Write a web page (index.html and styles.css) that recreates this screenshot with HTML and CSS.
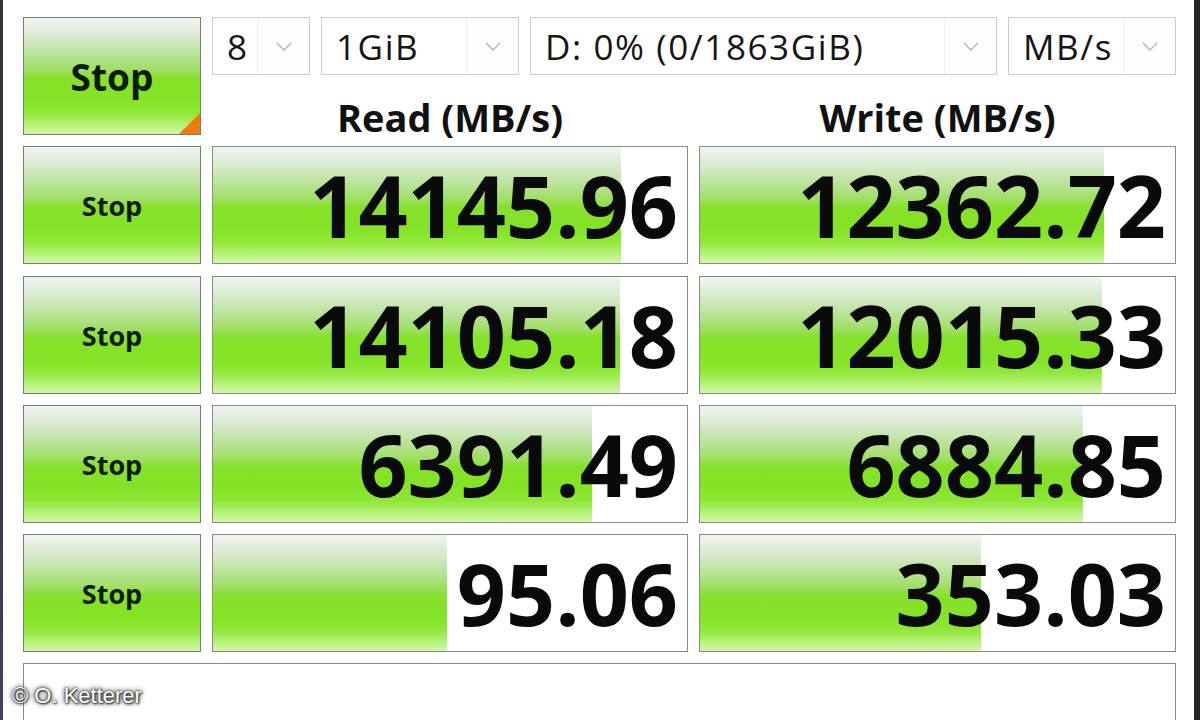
FILE: index.html
```html
<!DOCTYPE html>
<html>
<head>
<meta charset="utf-8">
<title>CrystalDiskMark</title>
<link rel="stylesheet" href="styles.css">
</head>
<body>
<div class="window">
  <div class="edge-l"></div>
  <main class="app">
    <div class="grid">
      <button class="stop stop-all">Stop</button>
      <div class="controls">
        <div class="combos">
          <div class="combo c-count"><span class="val">8</span><span class="arrow"><svg viewBox="0 0 16 9" width="16" height="9"><path d="M1 1 L8 8 L15 1" /></svg></span></div>
          <div class="combo c-size"><span class="val">1GiB</span><span class="arrow"><svg viewBox="0 0 16 9" width="16" height="9"><path d="M1 1 L8 8 L15 1" /></svg></span></div>
          <div class="combo c-drive"><span class="val">D: 0% (0/1863GiB)</span><span class="arrow"><svg viewBox="0 0 16 9" width="16" height="9"><path d="M1 1 L8 8 L15 1" /></svg></span></div>
          <div class="combo c-unit"><span class="val">MB/s</span><span class="arrow"><svg viewBox="0 0 16 9" width="16" height="9"><path d="M1 1 L8 8 L15 1" /></svg></span></div>
        </div>
        <div class="heads">
          <div class="head">Read (MB/s)</div>
          <div class="head">Write (MB/s)</div>
        </div>
      </div>

      <button class="stop">Stop</button>
      <div class="cell" style="--w:86.1%">14145.96</div>
      <div class="cell" style="--w:85.1%">12362.72</div>

      <button class="stop">Stop</button>
      <div class="cell" style="--w:85.9%">14105.18</div>
      <div class="cell" style="--w:84.6%">12015.33</div>

      <button class="stop">Stop</button>
      <div class="cell" style="--w:80.0%">6391.49</div>
      <div class="cell" style="--w:80.6%">6884.85</div>

      <button class="stop">Stop</button>
      <div class="cell" style="--w:49.4%">95.06</div>
      <div class="cell" style="--w:59.2%">353.03</div>

      <div class="comment"></div>
    </div>
  </main>
  <div class="edge-r"></div>
  <div class="watermark">© O. Ketterer</div>
</div>
</body>
</html>
```

FILE: styles.css
```css
* { box-sizing: border-box; }

html, body {
  margin: 0;
  padding: 0;
  background: #ffffff;
}

.window {
  position: relative;
  display: flex;
  width: 1200px;
  height: 720px;
  overflow: hidden;
  background: #ffffff;
  font-family: "Open Sans", "Noto Sans", sans-serif;
  color: #111111;
}

.edge-l {
  width: 3px;
  flex: none;
  background: linear-gradient(to bottom, #34343a 0%, #3a3848 60%, #463e66 100%);
}

.edge-r {
  width: 6px;
  flex: none;
  background: #262628;
}

.app {
  flex: 1;
  padding: 17px 0 0 20px;
}

.grid {
  display: grid;
  grid-template-columns: 178px 476px 477px;
  grid-template-rows: 118px repeat(4, 118px) 80px;
  column-gap: 11px;
  row-gap: 11.3px;
}

.stop {
  position: relative;
  margin: 0;
  padding: 2px 0 0 0;
  border: 1px solid #7a7a7a;
  background: linear-gradient(to bottom,
    #f1f4ef 0%,
    #dcebd4 14%,
    #b9e398 32%,
    #9cdf5e 46%,
    #86e12a 52%,
    #84e326 70%,
    #8fe838 82%,
    #b6f179 92%,
    #d2f8a8 100%);
  font-family: "Open Sans", "Noto Sans", sans-serif;
  font-weight: 700;
  font-size: 27px;
  line-height: 114px;
  color: #0c1a08;
  text-align: center;
}

.stop-all {
  font-size: 37px;
}

.stop-all::after {
  content: "";
  position: absolute;
  right: 0;
  bottom: 0;
  width: 0;
  height: 0;
  border-style: solid;
  border-width: 0 0 21px 21px;
  border-color: transparent transparent #f07a0c transparent;
}

.controls {
  grid-column: 2 / 4;
  display: flex;
  flex-direction: column;
}

.combos {
  display: flex;
  gap: 11px;
  height: 58px;
}

.combo {
  display: flex;
  height: 58px;
  border: 1px solid #cdcdcd;
  background: #ffffff;
}

.c-count { width: 98px; }
.c-size { width: 198px; }
.c-drive { width: 467px; }
.c-unit { width: 168px; }

.val {
  flex: 1;
  padding: 2px 0 0 14px;
  font-size: 35px;
  letter-spacing: 1.6px;
  line-height: 54px;
  color: #161616;
  white-space: nowrap;
  overflow: hidden;
}

.arrow {
  width: 52px;
  flex: none;
  display: flex;
  align-items: center;
  justify-content: center;
  border-left: 1px solid #efefef;
  background: #fdfdfd;
}

.arrow svg path {
  fill: none;
  stroke: #b4b4b4;
  stroke-width: 1.4;
}

.heads {
  display: grid;
  grid-template-columns: 476px 477px;
  column-gap: 11px;
  height: 60px;
  padding-top: 23px;
}

.head {
  text-align: center;
  font-weight: 700;
  font-size: 38px;
  line-height: 38px;
  color: #111111;
  white-space: nowrap;
}

.cell {
  border: 1px solid #8a8a8a;
  background:
    linear-gradient(to bottom,
      #f1f4ef 0%,
      #dcebd4 14%,
      #b9e398 32%,
      #9cdf5e 46%,
      #86e12a 52%,
      #84e326 70%,
      #8fe838 82%,
      #b6f179 92%,
      #d2f8a8 100%) 0 0 / var(--w) 100% no-repeat,
    #ffffff;
  text-align: right;
  padding-right: 9px;
  font-weight: 700;
  font-size: 86px;
  line-height: 116px;
  color: #0a0a0a;
  white-space: nowrap;
}

.comment {
  grid-column: 1 / 4;
  border: 1px solid #8a8a8a;
  background: #ffffff;
}

.watermark {
  position: absolute;
  left: 12px;
  top: 683px;
  font-family: "Liberation Sans", Arial, sans-serif;
  font-size: 22px;
  line-height: 26px;
  color: #ffffff;
  text-shadow: 0 0 2px #202020, 0 0 4px #404040, 0 0 6px #606060, 1px 1px 2px #303030;
  white-space: nowrap;
}
```
